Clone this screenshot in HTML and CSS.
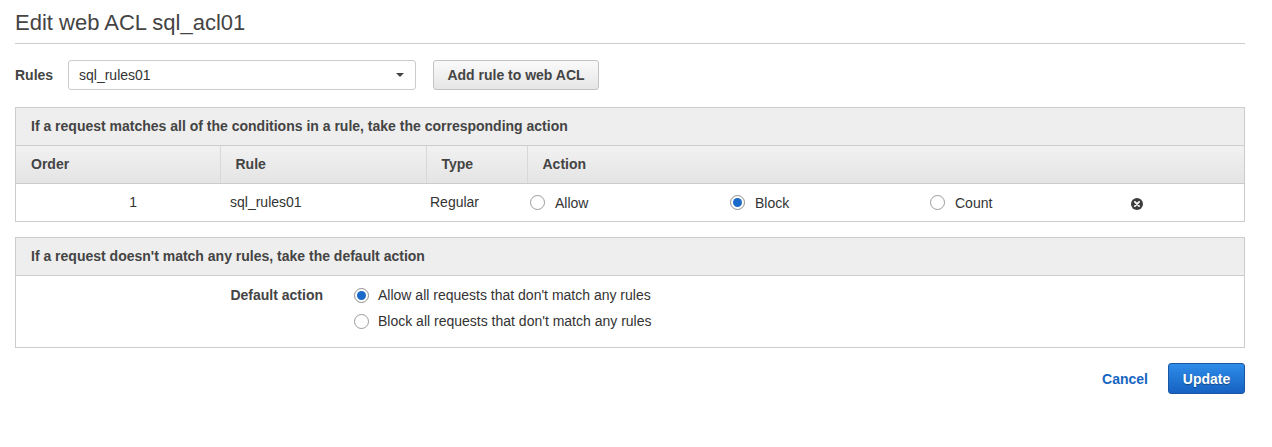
FILE: index.html
```html
<!DOCTYPE html>
<html>
<head>
<meta charset="utf-8">
<link rel="stylesheet" href="styles.css">
</head>
<body>
<div class="page">
  <h1 class="title">Edit web ACL sql_acl01</h1>

  <div class="rules-row">
    <label class="rules-label">Rules</label>
    <div class="select">
      <span class="select-value">sql_rules01</span>
      <span class="caret"></span>
    </div>
    <button class="btn">Add rule to web ACL</button>
  </div>

  <div class="panel">
    <div class="panel-head">If a request matches all of the conditions in a rule, take the corresponding action</div>
    <table class="rules-table">
      <colgroup>
        <col class="c-order"><col class="c-rule"><col class="c-type">
        <col class="c-act"><col class="c-act"><col class="c-act"><col>
      </colgroup>
      <thead>
        <tr>
          <th>Order</th>
          <th>Rule</th>
          <th>Type</th>
          <th colspan="4">Action</th>
        </tr>
      </thead>
      <tbody>
        <tr>
          <td class="td-order">1</td>
          <td class="td-rule">sql_rules01</td>
          <td class="td-type">Regular</td>
          <td class="td-act"><span class="radio"></span><span>Allow</span></td>
          <td class="td-act"><span class="radio checked"></span><span>Block</span></td>
          <td class="td-act"><span class="radio"></span><span>Count</span></td>
          <td class="td-remove"><span class="remove"><svg width="12" height="12" viewBox="0 0 12 12"><circle cx="6" cy="6" r="6" fill="#3d3d3d"/><path d="M3.9 3.9 L8.1 8.1 M8.1 3.9 L3.9 8.1" stroke="#fff" stroke-width="1.8" stroke-linecap="round"/></svg></span></td>
        </tr>
      </tbody>
    </table>
  </div>

  <div class="panel panel-default">
    <div class="panel-head">If a request doesn't match any rules, take the default action</div>
    <div class="default-body">
      <div class="default-label">Default action</div>
      <div class="options">
        <div class="option"><span class="radio checked"></span><span>Allow all requests that don't match any rules</span></div>
        <div class="option"><span class="radio"></span><span>Block all requests that don't match any rules</span></div>
      </div>
    </div>
  </div>

  <div class="actions">
    <a class="cancel">Cancel</a>
    <button class="btn-primary">Update</button>
  </div>
</div>
</body>
</html>
```

FILE: styles.css
```css
* { box-sizing: border-box; }
html, body { margin: 0; padding: 0; background: #fff; }
body {
  font-family: "Liberation Sans", Arial, Helvetica, sans-serif;
  font-size: 14px;
  color: #444;
}
.page {
  padding: 0 27px 0 15px;
}
.title {
  margin: 0;
  padding-top: 10px;
  padding-bottom: 7px;
  font-size: 22px;
  line-height: 26px;
  font-weight: normal;
  color: #444;
  border-bottom: 1px solid #ccc;
}
.rules-row {
  display: flex;
  align-items: center;
  margin-top: 16px;
  height: 30px;
}
.rules-label {
  font-weight: bold;
  width: 53px;
  color: #444;
}
.select {
  width: 348px;
  height: 30px;
  border: 1px solid #ccc;
  border-radius: 3px;
  display: flex;
  align-items: center;
  justify-content: space-between;
  padding: 0 11px 0 10px;
  background: #fff;
  color: #333;
}
.caret {
  width: 0; height: 0;
  border-left: 4px solid transparent;
  border-right: 4px solid transparent;
  border-top: 4px solid #444;
}
.btn {
  margin-left: 17px;
  width: 166px;
  height: 30px;
  font-family: inherit;
  font-size: 14px;
  font-weight: bold;
  color: #444;
  border: 1px solid #c2c2c2;
  border-radius: 3px;
  background: linear-gradient(#fafafa, #e6e6e6);
  padding: 0;
}
.panel {
  margin-top: 17px;
  border: 1px solid #ccc;
}
.panel-head {
  height: 38px;
  line-height: 37px;
  background: #eee;
  padding-left: 15px;
  font-weight: bold;
  color: #444;
  border-bottom: 1px solid #ccc;
}
.rules-table {
  width: 100%;
  border-collapse: collapse;
  table-layout: fixed;
}
.c-order { width: 204px; }
.c-rule { width: 206px; }
.c-type { width: 101px; }
.c-act { width: 200px; }
.rules-table th {
  height: 37px;
  text-align: left;
  padding: 0 0 0 15px;
  font-weight: bold;
  color: #444;
  background: linear-gradient(#f1f1f1, #e4e4e4);
  border-bottom: 1px solid #ccc;
  border-left: 1px solid #d8d8d8;
}
.rules-table th:first-child { border-left: none; }
.rules-table td {
  height: 38px;
  padding: 0;
  color: #333;
  white-space: nowrap;
}
.td-order { text-align: right; padding-right: 83px !important; }
.td-rule { padding-left: 10px !important; }
.td-type { padding-left: 4px !important; }
.td-act span { vertical-align: middle; }
.td-act { padding-left: 3px !important; }
.td-act .radio { margin-right: 10px; }
.td-remove { padding-left: 4px !important; }
.remove { display: inline-flex; vertical-align: middle; }
.radio {
  display: inline-block;
  width: 15px;
  height: 15px;
  border-radius: 50%;
  border: 1px solid #9a9a9a;
  background: #fff;
  position: relative;
  flex: none;
}
.radio.checked {
  border-color: #8f8f8f;
}
.radio.checked::after {
  content: "";
  position: absolute;
  left: 2px; top: 2px;
  width: 9px; height: 9px;
  border-radius: 50%;
  background: #1b6ac9;
}
.panel-default { margin-top: 15px; }
.default-body {
  display: flex;
  padding: 6px 0 13px 0;
}
.default-label {
  width: 307px;
  text-align: right;
  font-weight: bold;
  line-height: 26px;
  color: #444;
}
.options { margin-left: 31px; }
.option {
  display: flex;
  align-items: center;
  height: 26px;
  color: #333;
}
.option .radio { margin-right: 9px; }
.actions {
  display: flex;
  justify-content: flex-end;
  align-items: center;
  margin-top: 15px;
}
.cancel {
  font-weight: bold;
  color: #1665c1;
  margin-right: 20px;
}
.btn-primary {
  width: 77px;
  height: 31px;
  font-family: inherit;
  font-size: 14px;
  font-weight: bold;
  color: #fff;
  text-shadow: 0 1px 1px rgba(0,0,0,0.35);
  border: 1px solid #1a57a3;
  border-radius: 3px;
  background: linear-gradient(#2e8ce8, #1662c2);
  padding: 0;
}
```
